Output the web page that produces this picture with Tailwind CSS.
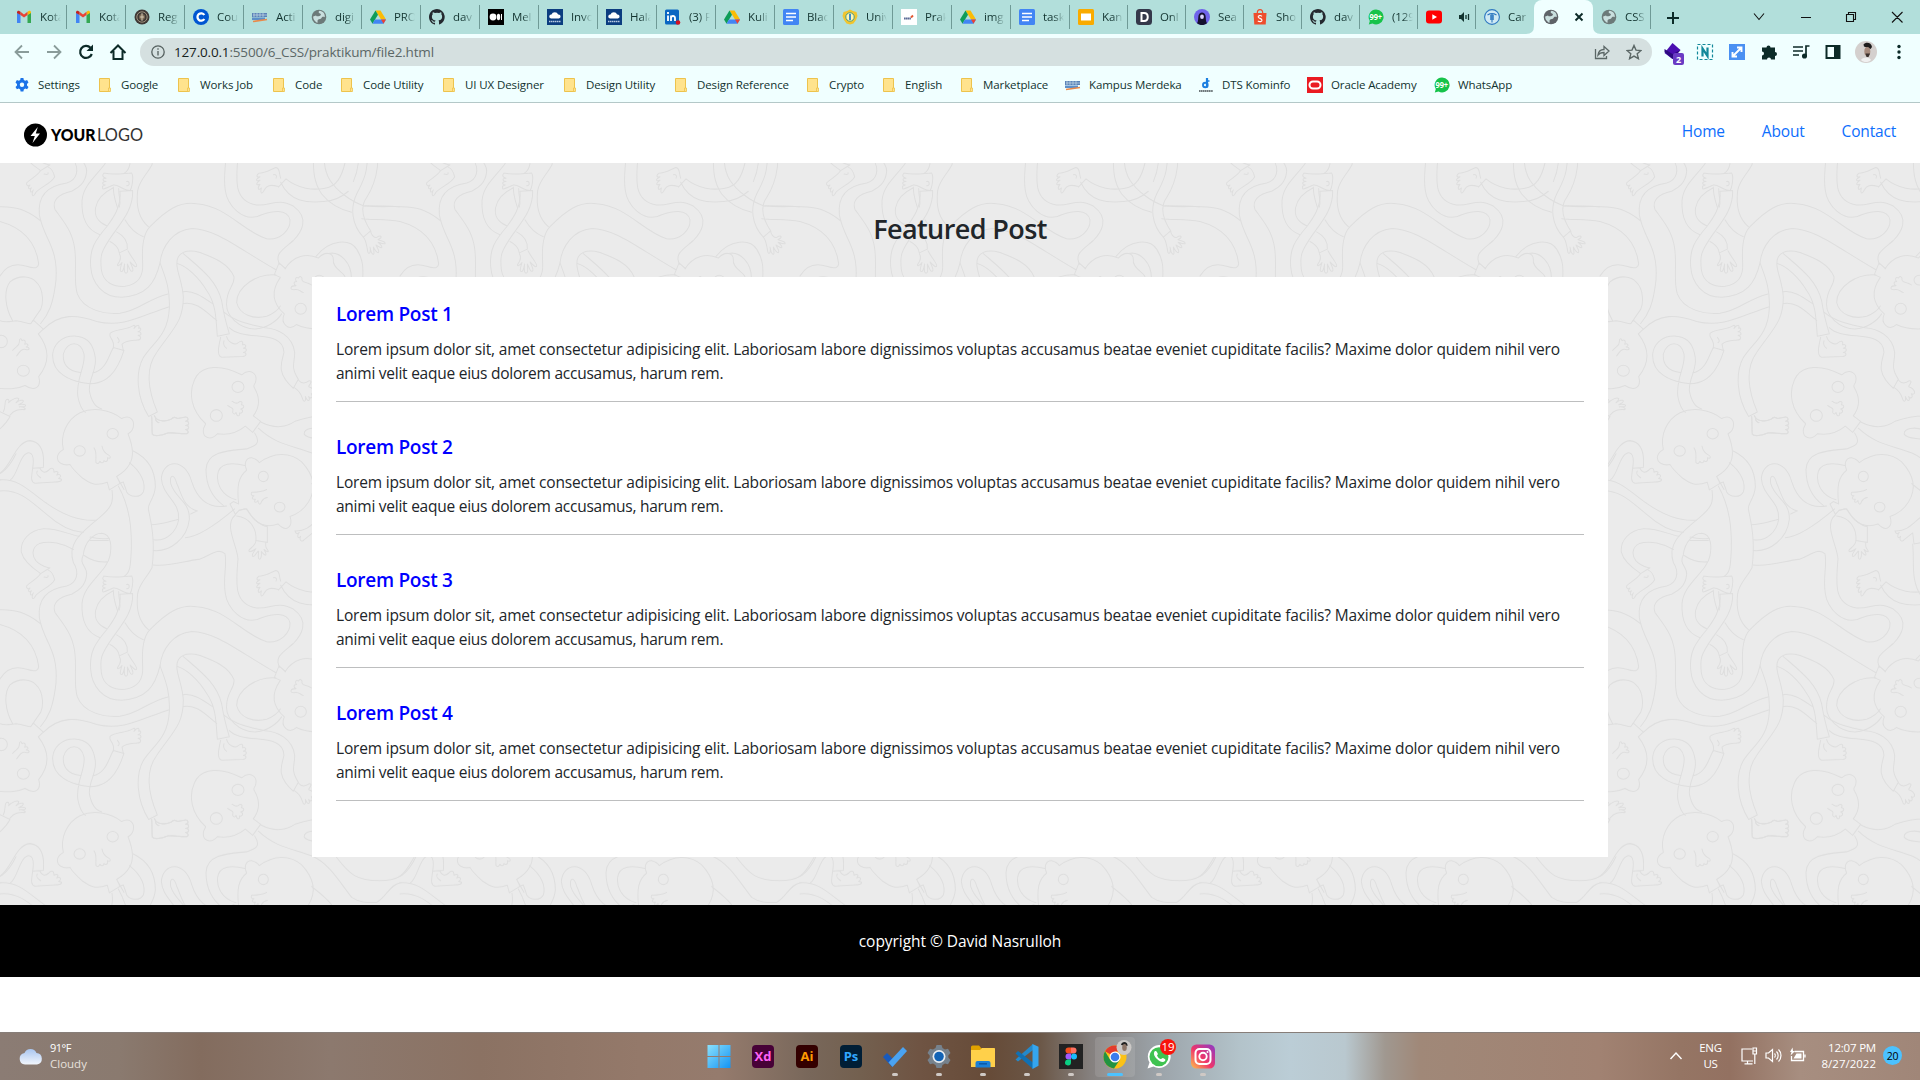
<!DOCTYPE html>
<html lang="en">
<head>
<meta charset="utf-8">
<title>Featured Post</title>
<script src="https://cdn.jsdelivr.net/npm/@tailwindcss/browser@4"></script>
</head>
<body class="flex h-[1080px] w-[1920px] flex-col overflow-hidden bg-white font-['Open_Sans',sans-serif] text-[#212529]">

<!-- icon library -->
<svg class="hidden">
  <symbol id="gmail" viewBox="0 0 16 16"><path d="M1 14V3.5L4.5 6v8z" fill="#4285f4"/><path d="M11.500 14V6L15 3.500V14z" fill="#34a853"/><path d="M11.500 6V2.800l1.200-.9C13.700 1.300 15 2 15 3.300V4z" fill="#fbbc04"/><path d="M4.500 6 8 8.600 11.500 6V2.800L8 5.400 4.500 2.800z" fill="#ea4335"/><path d="M1 4v-.7C1 2 2.300 1.300 3.300 1.900l1.200.9V6z" fill="#c5221f"/></symbol>
  <symbol id="seal" viewBox="0 0 16 16"><circle cx="8" cy="8" r="7.500" fill="#3e3835"/><circle cx="8" cy="8" r="5.200" fill="none" stroke="#b9a890" stroke-width=".8"/><circle cx="8" cy="8" r="3" fill="#7c6a55"/><path d="M8 4v8M6 8h4" stroke="#e5d9c4" stroke-width=".8"/></symbol>
  <symbol id="cour" viewBox="0 0 16 16"><circle cx="8" cy="8" r="8" fill="#0056d2"/><path d="M11.300 6A3.700 3.700 0 1 0 11.300 10" fill="none" stroke="#fff" stroke-width="2.300"/></symbol>
  <symbol id="kampus" viewBox="0 0 16 16"><path d="M0 4h15v4H0z" fill="#5a83b8"/><path d="M1 6h14M2 4v4M5 4v4M8 4v4M11 4v4" stroke="#d7e7ef" stroke-width=".6"/><path d="M0 8.500h13v2.500H0z" fill="#5c8fc9"/><path d="M1 12.500 15 10.500" stroke="#e98a4a" stroke-width="1.600"/></symbol>
  <symbol id="globe" viewBox="0 0 16 16"><circle cx="8" cy="8" r="7.300" fill="currentColor"/><path d="M8.500 1.800C7 3 7.500 4 9 4.500s1 2-.5 2.500-3 .5-3.500-.5L2.200 7.500C2 10 4 13 6.500 13.800c.5-1-.5-2 .5-3s3-.3 3.500-1.800 2-1.500 3.300-.8C14.200 5 12 2 8.500 1.800z" fill="#c9dfde"/></symbol>
  <symbol id="drive" viewBox="0 0 16 16"><path d="M5.500 1.500h5L16 10.500h-5z" fill="#fbbc04"/><path d="M5.500 1.500 8 5.700 2.500 14.800 0 10.500z" fill="#0f9d58"/><path d="M5 10.500h11l-2.500 4.300h-11z" fill="#4285f4"/><path d="m11 10.500 5 0-2.500 4.300z" fill="#ea4335"/></symbol>
  <symbol id="github" viewBox="0 0 16 16"><path fill="#24292f" d="M8 0C3.580 0 0 3.580 0 8c0 3.540 2.290 6.530 5.470 7.590.4.070.55-.17.55-.38v-1.490c-2.230.48-2.690-1.070-2.690-1.070-.36-.93-.89-1.170-.89-1.170-.73-.5.050-.49.050-.49.8.060 1.230.83 1.230.83.710 1.220 1.870.87 2.330.66.070-.51.280-.87.500-1.070-1.770-.2-3.640-.89-3.640-3.950 0-.87.310-1.590.82-2.150-.080-.2-.360-1.020.080-2.120 0 0 .67-.210 2.200.820a7.600 7.600 0 0 1 4 0c1.530-1.040 2.200-.820 2.200-.820.440 1.100.160 1.920.080 2.120.510.560.820 1.270.820 2.150 0 3.070-1.870 3.750-3.650 3.950.290.250.540.730.540 1.480v2.200c0 .210.150.460.550.380A8 8 0 0 0 8 0z"/></symbol>
  <symbol id="medium" viewBox="0 0 16 16"><path d="M0 0h16v16H0z"/><circle cx="5" cy="8" r="3.400" fill="#fff"/><ellipse cx="10.500" cy="8" rx="1.700" ry="3.200" fill="#fff"/><path d="M13.500 5v6" stroke="#fff"/></symbol>
  <symbol id="cloudhost" viewBox="0 0 16 16"><path d="M0 0h16v16H0z" fill="#0b3d80"/><path d="M4 9.500a2 2 0 0 1 .5-4 3.500 3.500 0 0 1 6.600 0 2 2 0 0 1 .9 4z" fill="#fff"/><path d="M2 12.500h12" stroke="#b9cbe3" stroke-width="1.500" stroke-dasharray="1.500 .5"/></symbol>
  <symbol id="linkedin" viewBox="0 0 16 16"><rect width="14" height="15" y=".5" rx="1.500" fill="#0a66c2"/><path d="M3 6.500V12M3 3v2M6 12V6.500M6 9c0-2.500 4-2.800 4 0v3" fill="none" stroke="#fff" stroke-width="1.800"/><circle cx="13" cy="13.500" r="2.300" fill="#d11124"/></symbol>
  <symbol id="docs" viewBox="0 0 16 16"><rect width="16" height="16" rx="1.500" fill="#4285f4"/><path d="M3 4.500h10M3 8h10M3 11.500h7" stroke="#fff" stroke-width="1.600"/></symbol>
  <symbol id="univ" viewBox="0 0 16 16"><path d="m8 .5 3 1.500 3.500 1L15.500 7 14 11l-2.500 3.500L8 15.500l-3.500-1L2 11 .5 7 1.500 3 5 2z" fill="#f0c52f"/><circle cx="8" cy="8" r="4.200" fill="#fff6b5" stroke="#4c9a80" stroke-width="1"/><path d="M7 5h2v6H7z" fill="#3e8ecb"/></symbol>
  <symbol id="prak" viewBox="0 0 16 16"><path d="M0 0h16v16H0z" fill="#fff"/><path d="M3 9.500h7" stroke="#5b6b96" stroke-width="2" stroke-dasharray="1.500 .3"/><path d="m10 8.500 2-2" stroke="#e4572e" stroke-width="1.800"/></symbol>
  <symbol id="slides" viewBox="0 0 16 16"><rect width="16" height="16" rx="1.500" fill="#f9ab00"/><path d="M3 4.500h10v7H3z" fill="#fff"/></symbol>
  <symbol id="dsq" viewBox="0 0 16 16"><rect width="16" height="16" rx="3.500" fill="#34384a"/><path d="M5.500 4v8H8c5 0 5-8 0-8z" fill="none" stroke="#fff" stroke-width="2"/></symbol>
  <symbol id="sea" viewBox="0 0 16 16"><circle cx="8" cy="8" r="8" fill="#6f63ea"/><path d="M3 14.200C4.500 12 4 9 4.500 6.500c1-4 6-4 7 0 .5 2.500 0 5.500 1.500 7.700-3 2.400-7 2.400-10 0z" fill="#15112e"/><ellipse cx="8" cy="7.800" rx="1.900" ry="2.300" fill="#d9d4ff"/></symbol>
  <symbol id="shopee" viewBox="0 0 16 16"><path d="M1.500 4h13l-.8 11.500H2.300z" fill="#ee4d2d"/><path d="M5.300 4c0-4.500 5.400-4.500 5.400 0" fill="none" stroke="#ee4d2d" stroke-width="1.200"/><path d="M10 7.300C8.500 6 6 6.500 6.200 8c.2 1.600 3.800 1.200 3.800 3.200 0 1.600-2.500 2-4.200.6" fill="none" stroke="#fff" stroke-width="1.100"/></symbol>
  <symbol id="wa99" viewBox="0 0 16 16"><path d="M8 .5A7.500 7.500 0 1 1 4.500 14.600L.8 15.500 1.800 12A7.500 7.500 0 0 1 8 .5z" fill="#16c34a"/><text x="7.800" y="11" font-size="8" font-weight="700" text-anchor="middle" fill="#fff" textLength="12.500" lengthAdjust="spacingAndGlyphs">99+</text></symbol>
  <symbol id="yt" viewBox="0 0 16 16"><rect y="1.500" width="16" height="13" rx="3" fill="#f00"/><path d="M6.300 5.300v5.400L11 8z" fill="#fff"/></symbol>
  <symbol id="canv" viewBox="0 0 16 16"><circle cx="8" cy="8" r="7.400" fill="#cfe9f3" stroke="#2e78c0" stroke-width="1.100"/><path d="M3.500 6C6 4.500 10 4.500 12.500 6M8 5v8.500M6.800 6v5M9.200 6v5" fill="none" stroke="#2e78c0" stroke-width="1.100"/></symbol>
  <symbol id="gear" viewBox="0 0 16 16"><path fill="#1a73e8" d="M6.600 1h2.800l.4 2 1.400.8 1.900-.7 1.400 2.400L13 6.900v1.700l1.500 1.300-1.400 2.400-1.900-.7-1.400.8-.4 2.100H6.600l-.4-2.100-1.400-.8-1.900.7-1.400-2.400L3 8.600V6.900L1.500 5.500l1.400-2.400 1.900.7L6.200 3z"/><circle cx="8" cy="7.700" r="2.200" fill="#f0ffff"/></symbol>
  <symbol id="folder" viewBox="0 0 16 16"><path d="M2.500 1.500h10v13h-10z" fill="#ffe38d" stroke="#edc34d"/><path d="M11.500 11h2v3.500h-2z" fill="#ffe38d" stroke="#edc34d" stroke-width=".8"/></symbol>
  <symbol id="dts" viewBox="0 0 16 16"><path d="M9 1v9.500" stroke="#1c7fe0" stroke-width="2.200"/><circle cx="7.300" cy="8" r="2.300" fill="none" stroke="#1c7fe0" stroke-width="1.900"/><path d="M9 4h2.500" stroke="#1c7fe0" stroke-width="1.500"/><path d="M1 14h14" stroke="#444c50" stroke-width="1.600" stroke-dasharray="1.500 .4"/></symbol>
  <symbol id="oracle" viewBox="0 0 16 16"><path d="M0 0h16v16H0z" fill="#ea1b22"/><rect x="2.500" y="4.500" width="11" height="7" rx="3.500" fill="none" stroke="#fff" stroke-width="2"/></symbol>
</svg>

<!-- tab strip -->
<div class="flex h-[34px] shrink-0 items-center bg-[#b2dfdb] text-[11.500px] tracking-[-0.100px] text-[#12332f]">
  <div id="tabs" class="flex h-full items-center"></div>
  <svg class="ml-[14px] mt-px size-4" viewBox="0 0 16 16"><path d="M8 2v12M2 8h12" stroke="#0c2b28" stroke-width="2"/></svg>
  <svg class="ml-auto mr-[4px] h-[30px] w-[160px] overflow-visible" viewBox="0 0 160 30" fill="none" stroke="#111" stroke-width="1.100"><path d="m-2 11.500 5 6 5-6"/><path d="M45 15.500h10M90.500 12.500h7v7h-7zM92.500 12.500v-2h7v7h-2M136 10l10.500 10.500M146.500 10 136 20.500"/></svg>
</div>

<!-- toolbar -->
<div class="flex h-[36px] shrink-0 items-center bg-[#f0ffff] pl-3 pr-[12px]">
  <div class="flex gap-3 text-[#0c2b28]">
    <svg class="size-5" viewBox="0 0 20 20" fill="none" stroke="#8a9c9a" stroke-width="1.800"><path d="M17 10H4M10 3.500 3.500 10l6.500 6.500"/></svg>
    <svg class="size-5" viewBox="0 0 20 20" fill="none" stroke="#8a9c9a" stroke-width="1.800"><path d="M3 10h13M10 3.500l6.500 6.500-6.500 6.500"/></svg>
    <svg class="size-5" viewBox="0 0 20 20"><path d="M15.800 12A6 6 0 1 1 14.500 5.800" fill="none" stroke="currentColor" stroke-width="2.200"/><path d="M17 2.500V9h-6.500z" fill="currentColor"/></svg>
    <svg class="size-5" viewBox="0 0 20 20"><path d="M5.500 9v8h9V9M2.500 11 10 3.500l7.500 7.500" fill="none" stroke="currentColor" stroke-width="2"/></svg>
  </div>
  <div class="ml-3 flex h-7 w-[1512px] items-center rounded-full bg-[#d5e0e0] pl-[11px] pr-[10px]">
    <svg class="size-[14px]" viewBox="0 0 14 14" fill="none" stroke="#55605f" stroke-width="1.300"><circle cx="7" cy="7" r="6.200"/><path d="M7 6v4.500M7 3.300v1.500"/></svg>
    <span class="ml-[9px] text-[13.500px] tracking-[-0.170px] text-[#5b6766]"><span class="text-[#152220]">127.0.0.1</span>:5500/6_CSS/praktikum/file2.html</span>
    <svg class="ml-auto size-4" viewBox="0 0 16 16" fill="none" stroke="#5b6766" stroke-width="1.300"><path d="M1.500 5v9.500h11V12M4 11c.5-4 3-5.500 6-5.500v-3L15 7l-5 4.500v-3c-3 0-4.500.5-6 2.500z"/></svg>
    <svg class="ml-4 size-4" viewBox="0 0 16 16" fill="none" stroke="#5b6766" stroke-width="1.400"><path d="m8 1.500 2 4.600 5 .4-3.800 3.300 1.200 4.900L8 12.100l-4.400 2.600 1.200-4.900L1 6.500l5-.4z"/></svg>
  </div>
  <div class="ml-auto -mr-px flex items-center gap-[12px]">
    <svg class="size-5 overflow-visible" viewBox="0 0 20 20"><path d="m9.500 1 8 7-8 9-8-6z" fill="#4a0fb0"/><path d="m1.500 7 8 5 8-4-8 9-8-7z" fill="#2c0a80"/><rect x="10" y="11" width="11" height="12" rx="2" fill="#6a3bc4"/><text x="15.500" y="20.500" font-size="9" font-weight="700" fill="#fff" text-anchor="middle">2</text></svg>
    <svg class="size-5" viewBox="0 0 20 20" fill="none" stroke="#12889a"><path d="M2.500 2.500h15v15h-15z" stroke-dasharray="3 2" stroke-width="1.200"/><path d="M7.500 14.500V6.500l5 7.500V5.500" stroke-width="2.200"/></svg>
    <svg class="size-5" viewBox="0 0 20 20"><path d="M2 2h16v16H2z" fill="#4a90f2"/><path d="m6.500 13.500 7-7M10 5.500h4.500V10M5.500 10v4.500H10" fill="none" stroke="#fff" stroke-width="1.900"/></svg>
    <svg class="size-5" viewBox="0 0 20 20" fill="#0c2b28"><path d="M3 5.500h4.500a2 2 0 1 1 4 0H16V10a2 2 0 1 1 0 4v3.500h-4a2 2 0 1 0-4 0H3V13.500a2 2 0 1 0 0-4z"/></svg>
    <svg class="size-5" viewBox="0 0 20 20" fill="none" stroke="#0c2b28" stroke-width="1.700"><path d="M2 5h10M2 9h10M2 13h6M15 14V4h3.500"/><circle cx="13.500" cy="14" r="1.700" fill="#0c2b28"/></svg>
    <svg class="size-5" viewBox="0 0 20 20"><path d="M2.500 3h15v14h-15z" fill="#0c2b28"/><path d="M4.500 5H11v10H4.500z" fill="#f0ffff"/></svg>
    <svg class="size-[22px]" viewBox="0 0 22 22"><circle cx="11" cy="11" r="11" fill="#d4d0ce"/><path d="M8.500 3.500c2-3 8-2.500 8.500 2.500l-1.500 2-6.500-2.500z" fill="#1d1c1c"/><ellipse cx="12.300" cy="10.500" rx="3" ry="4.500" fill="#a58a7c"/><path d="M10.500 12.500h4.500l-1.500 3.500h-2z" fill="#3a302c"/><path d="M6 19c1-3.500 9-3.500 10 0-3 2.800-7 2.800-10 0z" fill="#f0f0f0"/></svg>
    <svg class="size-5" viewBox="0 0 20 20" fill="#0c2b28"><circle cx="10" cy="4.500" r="1.700"/><circle cx="10" cy="10" r="1.700"/><circle cx="10" cy="15.500" r="1.700"/></svg>
  </div>
</div>

<!-- bookmarks bar -->
<div id="bookmarks" class="flex h-[33px] shrink-0 items-center border-b border-[#b4c8c8] bg-[#f0ffff] pb-[3px] pl-[14px] text-[11.500px] tracking-[-0.100px] text-[#12332f]"></div>

<!-- site header -->
<header class="flex h-[60px] shrink-0 items-center justify-between px-6">
  <svg class="mt-[3px] h-6 w-[120px]" viewBox="0 0 120 24"><circle cx="11.500" cy="12" r="11.500"/><path d="M13.800 4 6.500 13h4.300L8.500 20l7.500-9.500h-4.200z" fill="#fff"/><text x="27" y="17.700" font-family="Lato" font-weight="900" font-size="16.500" textLength="44.500" lengthAdjust="spacingAndGlyphs">YOUR</text><text x="73" y="17.700" font-family="Lato" font-weight="400" font-size="16.500" textLength="46" lengthAdjust="spacingAndGlyphs" fill="#333">LOGO</text></svg>
  <nav class="mb-0.5 flex gap-[37px] text-[15.500px] tracking-[-0.180px] text-[#0d6efd]"><a>Home</a><a>About</a><a>Contact</a></nav>
</header>

<main class="relative flex h-[742px] shrink-0 flex-col items-center bg-[#ebebeb]">
  <!-- doodle wallpaper, one repeating tile -->
  <svg class="absolute inset-0 h-full w-full" fill="none" stroke="#dedede" stroke-width="3" stroke-linejoin="round" stroke-linecap="round">
    <defs>
      <g id="foot"><path d="M0 0C4 8 12 14 22 14C32 16 40 14 50 10C58 2 62 4 70 8L90 4C104 2 104 14 94 16C106 16 106 27 94 28C106 28 106 39 94 40C104 42 104 52 94 52C70 52 60 48 40 50C20 58 0 60-6 54C-8 40-6 20-8 2M4 6C2 14 8 18 14 20"/></g>
      <g id="hand"><path d="M0 0C6 10 4 20-4 30C-10 38 0 38 8 26C2 44 0 54 8 52C12 50 14 40 16 30C14 46 14 58 22 56C28 54 24 40 24 30C30 42 34 56 40 50C44 46 36 34 32 24C42 34 50 42 52 36C54 28 36 12 26-8"/></g>
      <g id="tile">
        <!-- large head, left -->
        <path d="M190 202C180 160 200 115 240 95C280 78 330 85 365 112C390 100 404 116 400 136C398 146 392 152 384 156C400 195 402 225 388 245C380 260 370 268 350 280L372 318M350 280L360 300L328 319L322 297C285 310 270 300 245 283C225 265 215 255 210 245C190 250 172 240 172 224C174 210 184 206 190 202"/>
        <ellipse cx="338" cy="156" rx="17" ry="15"/><ellipse cx="239" cy="206" rx="17" ry="15"/>
        <path d="M282 197C292 210 286 225 288 240C294 246 298 240 300 236C304 244 312 240 312 234C318 240 326 234 322 226C332 230 334 222 326 218C314 212 308 204 306 192"/>
        <path d="M400 206C440 225 466 260 466 310C464 345 444 355 445 375C455 420 466 470 456 545C440 575 418 590 413 620C408 660 415 700 445 725"/>
        <path d="M388 240C425 268 438 300 430 325C420 344 390 340 380 325C376 310 372 304 370 296L360 300"/>
        <path d="M336 320C341 355 335 370 300 398C250 440 200 470 220 530C240 560 230 590 200 598C150 605 112 630 118 690C130 760 175 780 168 880C160 950 145 980 122 1006"/>
        <path d="M355 308C390 370 395 430 394 490C392 540 390 560 374 569"/>
        <path d="M0 290C60 285 95 330 140 358C190 392 240 410 288 407M0 322C60 315 100 360 140 390C180 425 215 440 250 443M237 454C200 446 170 430 130 432C90 436 60 465 64 500C70 525 95 545 122 562M220 492C190 475 150 465 118 475C95 485 95 510 108 525C120 538 135 542 148 546"/>
        <path d="M250 506C255 470 280 445 305 445C335 448 335 485 330 510C320 560 250 590 246 650C244 700 262 735 300 748M250 508C235 535 262 540 260 565C256 600 235 612 215 622C175 630 155 650 165 675C195 715 224 745 226 810C228 860 222 890 232 920C250 965 310 980 360 976C420 968 440 935 504 920"/>
        <path d="M270 456C285 460 310 462 327 460M270 466H325M250 508C275 525 300 530 322 528"/>
        <path d="M122 562L150 545M122 562C110 580 85 590 80 598C78 606 84 608 90 604C80 614 90 618 94 612C86 626 96 628 100 618C92 636 100 640 106 628C115 612 155 600 164 580C160 562 154 556 145 552M132 572C140 574 146 574 144 568"/>
        <!-- twisted arm and foot -->
        <path d="M312 569C340 576 370 570 395 569C402 580 396 612 390 620C370 620 352 600 340 604C320 612 306 620 308 612C304 604 316 606 316 604C304 602 306 594 318 594C306 592 306 584 318 584C304 580 308 574 312 569M380 594C390 590 390 608 380 606M360 622L398 620C400 670 370 705 340 745C300 800 300 810 304 850C310 890 345 900 375 898C420 892 430 860 428 830C424 770 435 740 450 725C500 675 540 650 590 658C680 665 730 740 800 760C840 765 872 735 870 705C862 670 815 680 785 690C730 718 680 660 676 620C668 570 682 540 675 505C655 485 630 510 600 520C550 525 520 542 460 537"/>
        <path d="M360 622C365 665 340 700 320 725C285 765 268 790 272 840C275 890 310 930 365 930C440 925 465 890 480 830C486 780 520 735 575 730C650 732 710 785 828 850"/>
        <path d="M340 610C340 640 350 660 353 672M356 614C356 640 364 650 358 668M340 612C280 640 265 700 320 722M375 705C390 730 405 745 430 754M350 740C370 750 384 765 382 790L358 801C355 785 345 775 330 768"/>
        <use href="#hand" x="358" y="803"/>
        <!-- legs, centre -->
        <path d="M480 830C500 880 510 910 508 960C505 1040 460 1060 430 1105C405 1150 410 1220 446 1276L472 1263C440 1190 440 1130 470 1090C520 1020 550 1000 550 930C548 880 520 840 535 812C548 794 570 792 600 800C640 815 685 830 702 870C705 895 680 905 680 945C676 985 720 1022 765 1022C800 1020 830 1000 845 978"/>
        <use href="#foot" x="463" y="104"/><use href="#foot" x="463" y="1274"/>
        <path d="M550 803C600 845 650 880 665 940C670 975 680 1010 688 1036L652 1043C648 1000 650 950 620 910C595 870 560 840 532 832M548 914C580 908 610 930 640 950M550 948C590 940 620 975 650 997M688 1018C730 1060 850 1020 852 1090C844 1120 828 1150 880 1194L895 1168C870 1130 885 1120 884 1090C878 1040 830 1020 795 1018C750 1010 705 1000 672 973"/>
        <path d="M662 1046C655 1075 650 1100 665 1104L728 1102C742 1100 740 1090 730 1090C742 1088 742 1078 730 1078C742 1074 738 1064 728 1068C730 1054 722 1056 714 1062C705 1070 685 1062 680 1044M672 1056C668 1068 674 1074 680 1078"/>
        <path d="M883 1192C905 1205 905 1220 910 1230C916 1236 918 1226 916 1218C924 1236 932 1230 926 1218C934 1226 940 1220 934 1210C944 1214 948 1206 938 1196C932 1190 926 1192 926 1188C934 1178 936 1172 928 1172C918 1180 904 1182 895 1170"/>
        <path d="M828 865C770 860 710 900 710 945C718 980 760 995 800 985C825 975 835 965 841 955"/>
        <!-- lower leg loop -->
        <path d="M130 1023C180 975 230 980 290 1000C370 1020 430 980 508 957M278 1150C320 1140 325 1100 340 1076L372 1084C350 1150 320 1180 270 1181C210 1175 155 1150 158 1095C165 1035 250 1025 275 1070C305 1130 265 1160 268 1200C275 1240 290 1250 305 1254M242 1148C200 1145 188 1120 190 1095C200 1055 245 1055 252 1095C258 1130 225 1170 234 1220C240 1250 248 1258 256 1264"/>
        <path d="M340 1076C345 1050 325 1050 330 1035C340 1022 380 1025 398 1013C404 1008 408 1012 402 1020C412 1008 420 1008 416 1020C426 1016 424 1028 414 1030C426 1030 426 1042 414 1040C426 1044 424 1054 412 1054C395 1056 380 1055 366 1066L370 1084M352 1046C358 1052 360 1058 354 1062"/>
        <!-- head at the tile seam, left -->
        <path d="M48 998C70 1000 80 1006 92 1007L100 996L130 1022L115 1036C150 1080 150 1120 116 1160C125 1190 105 1205 75 1186C50 1198 20 1196 -10 1194M0 998C16 1004 30 1000 48 998"/>
        <ellipse cx="70" cy="1143" rx="18" ry="16"/><ellipse cx="4" cy="1058" rx="18" ry="18"/>
        <path d="M38 1084C50 1070 60 1070 58 1058C58 1048 64 1048 66 1056C74 1050 78 1058 74 1066C84 1062 88 1072 78 1074C90 1074 90 1084 80 1082C66 1078 60 1086 50 1100M38 998C15 960 10 910 30 885C60 862 95 870 108 885C132 905 130 950 122 965C112 980 104 988 98 1000M0 868C20 835 50 830 80 840C105 848 115 845 116 832C108 775 75 730 0 710C-40 702-80 706-115 702M122 708C80 675 45 665 -5 667C-40 664-70 664-105 664"/>
        <!-- foot and hand, far left -->
        <path d="M0 92L30 106C20 125 10 135-10 150M10 92C20 75 10 58 22 56C30 56 26 66 26 66C32 58 52 48 56 54C58 60 48 64 48 66C58 58 70 56 70 62C70 68 56 70 56 72C68 68 80 72 76 76C70 80 60 76 58 78C70 76 80 84 74 86C60 86 45 84 30 102"/>
        <path d="M0 270C35 250 45 180 90 176C125 180 134 210 130 254L98 256C104 220 95 205 78 214C60 220 50 280 32 289M98 256C95 280 90 295 105 300L165 296C190 296 188 286 176 286C188 278 180 272 170 276C178 268 172 262 162 268C162 252 152 254 146 262C135 272 125 268 120 256M112 264C106 276 116 278 122 284"/>
        <!-- head, centre right -->
        <path d="M617 127C575 90 560 35 590-12C610-40 660-48 725-15C750-35 775-20 766 8C758 18 762 20 764 24C785 60 775 85 760 104L782 120L758 152L736 134C710 155 680 160 652 156C630 180 605 165 611 140z"/>
        <ellipse cx="714" cy="20" rx="18" ry="16"/><ellipse cx="649" cy="103" rx="18" ry="17"/>
        <path d="M683 74C700 85 700 80 698 94C702 102 706 98 708 94C712 110 722 104 718 96C728 98 732 88 722 84C734 82 734 72 724 72C730 62 722 60 714 66C708 70 702 64 696 62"/>
        <path d="M782 122C830 145 860 135 885 120C930 105 980 95 1030 115M775 140C830 190 880 190 936 212C990 235 1020 290 1055 332C1080 348 1100 347 1130 347C1160 330 1170 295 1200 290M764 154C785 185 765 192 740 200C690 205 620 205 618 260C618 320 650 350 670 364M735 248C700 240 665 240 655 265C645 300 665 335 708 348M970 145C945 135 910 140 913 158C925 175 960 165 990 180C1010 200 990 200 1008 214C1050 267 1070 284 1140 284C1200 284 1225 260 1248 214"/>
        <!-- rotated head, right -->
        <path d="M778 240C820 210 870 208 905 238C950 285 945 325 925 355C910 378 890 390 870 396C880 425 860 445 834 418C800 430 780 420 765 407C750 395 745 375 735 374L718 378L706 390L690 360L700 353L716 360C710 310 715 280 740 262C730 240 740 225 755 226C770 230 774 234 778 240M935 301C960 320 975 330 995 354"/>
        <ellipse cx="790" cy="280" rx="15" ry="15" transform="rotate(-25 790 280)"/><ellipse cx="839" cy="369" rx="16" ry="14"/>
        <path d="M800 318C785 326 770 326 755 326C750 334 758 336 762 336C752 342 758 348 766 346C760 356 768 358 774 350C774 362 782 364 784 354C788 348 790 342 802 341M718 378L740 374C760 410 790 425 802 425L802 472L768 466C770 430 750 400 710 395"/>
        <path d="M768 466C768 484 740 492 748 498C754 500 764 492 768 490C752 510 756 516 764 510C770 502 776 494 776 498C774 510 774 522 780 520C786 516 784 500 784 498C790 506 798 512 798 506C798 498 792 496 792 492C800 500 810 502 802 492C796 486 796 478 798 470"/>
        <!-- curled legs -->
        <path d="M680 366C620 375 590 340 575 295C555 225 490 230 484 285C488 340 540 350 536 405C530 440 500 470 460 464M592 380C550 370 545 330 530 300C522 270 508 275 512 300C525 345 570 350 568 405C562 460 510 500 460 495M592 380L572 389M454 420C480 420 510 410 536 404M556 458C600 455 660 410 704 374M706 392C670 420 712 480 714 520C708 590 700 650 770 662C815 665 830 640 880 665C930 700 905 740 880 765C850 790 820 805 840 835"/>
        <!-- feet, right -->
        <path d="M835 610L858 586C895 615 940 620 975 613C1010 608 1025 580 1035 540C1040 510 1030 480 1020 450M842 596C870 655 925 656 970 652C1010 650 1030 635 1045 622M1060 594C1075 560 1080 530 1070 480M842 584C836 565 840 556 828 553C810 560 795 570 776 570C766 578 772 582 780 580C766 588 766 594 780 590C766 600 768 606 780 602C770 614 776 622 784 612C780 628 786 632 792 620C800 604 810 602 835 608M820 574C828 572 832 578 828 584"/>
        <path d="M885 438C920 440 935 420 960 400M885 438C888 450 896 446 898 442C888 456 896 462 902 454C896 466 906 472 912 464L938 444L942 476L985 468M938 476C944 530 930 580 965 630C990 660 1020 675 1055 683M975 470C970 520 970 560 990 590C1010 620 1050 650 1090 664C1150 670 1180 664 1200 667M1100 460C1110 570 1090 590 1070 630C1050 670 1055 720 1090 755L1112 737C1080 690 1085 660 1100 640C1140 580 1135 520 1132 470"/>
        <path d="M1090 755C1100 765 1100 785 1104 800C1112 808 1112 790 1110 784C1114 806 1122 810 1122 800L1120 784C1128 800 1138 806 1136 794L1128 778C1140 786 1150 790 1144 780L1134 770C1148 774 1160 778 1154 770C1144 764 1138 766 1134 762C1150 756 1144 748 1130 756C1120 758 1112 745 1112 737"/>
        <!-- seam head, right -->
        <path d="M855 847C880 810 920 800 955 816C975 795 1000 800 1000 820C995 845 1035 860 1035 871M841 872L823 864L837 830L857 847M841 872C810 915 820 950 853 978C840 1005 865 1030 889 1009C930 1028 980 1024 1020 1010C1060 990 1080 940 1070 890M948 811C990 760 1050 760 1070 790C1090 820 1090 845 1088 880M985 803C1020 795 1055 830 1054 875"/>
        <ellipse cx="902" cy="963" rx="17" ry="16"/><ellipse cx="958" cy="880" rx="16" ry="14"/>
        <path d="M934 894C920 884 910 890 906 880C908 870 898 866 896 874C886 868 884 880 890 884C880 884 880 894 888 896C870 896 868 908 882 908C898 904 900 914 910 916"/>
      </g>
      <pattern id="doodle" width="1200" height="1170" patternUnits="userSpaceOnUse" patternTransform="translate(0 217) scale(.33333 .34439)">
        <use href="#tile"/><use href="#tile" x="-1200"/><use href="#tile" y="-1170"/><use href="#tile" y="1170"/><use href="#tile" x="1200"/>
      </pattern>
    </defs>
    <rect width="1920" height="742" fill="url(#doodle)" stroke="none"/>
  </svg>
  <h1 class="relative mt-[49px] text-[27px] font-semibold leading-[34px] tracking-[-0.600px]">Featured Post</h1>
  <section id="posts" class="relative mt-[31px] flex h-[580px] w-[1296px] flex-col gap-8 bg-white p-6"></section>
</main>

<footer class="flex h-[72px] shrink-0 items-center justify-center bg-black pt-0.5 text-[15.500px] font-medium tracking-[-0.050px] text-white">copyright © David Nasrulloh</footer>

<!-- taskbar -->
<div class="mt-auto flex h-12 shrink-0 items-center justify-between border-t border-[#877e79] bg-[linear-gradient(90deg,#8b7c74_0px,#8a7a6f_120px,#836c5e_200px,#8c796e_330px,#8b7263_480px,#94796a_640px,#957b6d_720px,#78675a_810px,#73604f_860px,#6f5443_920px,#664b38_990px,#6b5747_1040px,#85807e_1090px,#9ca4aa_1160px,#b3c3ca_1240px,#bbcdd6_1290px,#b9c8cf_1345px,#a09890_1385px,#a08878_1420px,#a18272_1600px,#957564_1680px,#937161_1730px,#a78e80_1800px,#a08678_1920px)] text-[11.500px] leading-4 text-white">
  <div class="flex w-[680px] items-center pb-[2px] pl-[19px]">
    <svg class="h-[19px] w-6" viewBox="0 0 24 19"><defs><linearGradient id="cl" x2="0" y2="1"><stop stop-color="#a9c6f0"/><stop offset="1" stop-color="#f2f6fc"/></linearGradient></defs><path d="M6 18.500A5.800 5.800 0 0 1 5.500 7 6.500 6.500 0 0 1 17.500 7 5.800 5.800 0 0 1 18 18.500z" fill="url(#cl)"/></svg>
    <div class="ml-[7px]"><p class="text-[11px] font-medium tracking-[-0.500px]">91°F</p><p class="text-[#e7e0dc]">Cloudy</p></div>
  </div>
  <div id="apps" class="flex h-full items-center pl-[2px]"></div>
  <div class="flex w-[680px] items-center justify-end pb-[2px] pr-[18px]">
    <svg class="mr-[15px] size-4" viewBox="0 0 16 16" fill="none" stroke="#fff" stroke-width="1.400"><path d="m2.500 11 5.500-6 5.500 6"/></svg>
    <div class="mr-[17px] w-[24px] text-center tracking-[-0.200px]"><p>ENG</p><p>US</p></div>
    <svg class="mr-[7px] size-[18px]" viewBox="0 0 18 18" fill="none" stroke="#fff" stroke-width="1.200"><path d="M12 2H2v12h11M7.500 14v2.500M4.500 16.800h8M13 1h3.500v6H13zM14.800 7v10M13.500 4h3"/></svg>
    <svg class="mr-[7px] size-[17px]" viewBox="0 0 17 17" fill="none" stroke="#fff" stroke-width="1.200"><path d="M1 6v5h2.500L7.500 14.500v-12L3.500 6zM9.500 6.500c1 1 1 3 0 4M11.500 4.500c2.200 2.200 2.200 5.800 0 8M13.500 2.500c3.300 3.300 3.300 8.700 0 12"/></svg>
    <svg class="mr-[16px] size-[17px]" viewBox="0 0 17 17" fill="none" stroke="#fff" stroke-width="1.300"><path d="M5.500 4.500h9v9h-12V9M16 7.500v3"/><path d="M7.500 6.500h5v5h-8z" fill="#fff" stroke="none"/><path d="M3.500.5 1 5h1.500L1.500 8.500 6 4H4z" fill="#fff" stroke="none"/></svg>
    <div class="mr-[7px] text-right tracking-[0px]"><p class="tracking-[-0.200px]">12:07 PM</p><p>8/27/2022</p></div>
    <div class="flex size-[19px] items-center justify-center rounded-full bg-[#4cc2ff] text-[10.500px] tracking-[-0.300px] text-black">20</div>
  </div>
</div>

<script>
const icon = (id, cls) => `<svg class="${cls}"><use href="#${id}"/></svg>`;

const tabs = [['gmail','Kota'],['gmail','Kota'],['seal','Reg'],['cour','Cou'],['kampus','Acti'],['globe','digi'],['drive','PRO'],['github','dav'],['medium','Mel'],['cloudhost','Invo'],['cloudhost','Hala'],['linkedin','(3) F'],['drive','Kuli'],['docs','Blac'],['univ','Univ'],['prak','Prak'],['drive','img'],['docs','task'],['slides','Kan'],['dsq','Onl'],['sea','Sea'],['shopee','Sho'],['github','dav'],['wa99','(129'],['yt',''],['canv','Car'],['globe',null],['globe','CSS']];
document.getElementById('tabs').innerHTML = tabs.map(([i, t], n) => {
  if (t === null) return `<div class="relative flex h-full w-[59px] items-center rounded-t-lg bg-[#f0ffff] pl-[9px] text-[#5f6368]">
      <svg class="absolute bottom-0 -left-2 h-2 w-[75px] text-[#f0ffff]" viewBox="0 0 75 8"><path d="M0 8Q8 8 8 0V8zM75 8Q67 8 67 0V8z" fill="currentColor"/></svg>
      ${icon(i, 'size-4')}<svg class="ml-[14px] size-3" viewBox="0 0 12 12"><path d="m2.500 2.500 7 7M9.500 2.500l-7 7" stroke="#0c2b28" stroke-width="1.900"/></svg></div>`;
  const line = n === 25 ? '' : 'border-r border-[#6f9a96]';
  const width = n === 0 ? 'w-[67px] pl-4' : n < 18 ? 'w-[59px] pl-2' : 'w-[58px] pl-2';
  const text = i === 'yt'
    ? `<svg class="ml-4 size-3" viewBox="0 0 12 12"><path d="M1 4v4h2l3 3V1L3 4z" fill="#12332f"/><path d="M8 4v4M10.500 3v6" stroke="#12332f" stroke-width="1.300"/></svg>`
    : `<span class="ml-2 w-[21px] overflow-hidden whitespace-nowrap [mask-image:linear-gradient(90deg,#000_50%,transparent)]">${t}</span>`;
  return `<div class="flex h-6 items-center ${width} ${line}">${icon(i, i === 'globe' ? 'size-4 text-[#6c7a79]' : 'size-4')}${text}</div>`;
}).join('');

const marks = [['gear','Settings',83],['folder','Google',79],['folder','Works Job',95],['folder','Code',68],['folder','Code Utility',102],['folder','UI UX Designer',121],['folder','Design Utility',111],['folder','Design Reference',132],['folder','Crypto',76],['folder','English',78],['folder','Marketplace',106],['kampus','Kampus Merdeka',133],['dts','DTS Kominfo',109],['oracle','Oracle Academy',127],['wa99','WhatsApp',90]];
document.getElementById('bookmarks').innerHTML = marks.map(([i, t, w]) =>
  `<div class="flex shrink-0 items-center gap-2 whitespace-nowrap" style="width:${w}px">${icon(i, 'size-4 shrink-0')}<span>${t}</span></div>`).join('');

const lorem = 'Lorem ipsum dolor sit, amet consectetur adipisicing elit. Laboriosam labore dignissimos voluptas accusamus beatae eveniet cupiditate facilis? Maxime dolor quidem nihil vero<br><span class="tracking-[-0.250px]">animi velit eaque eius dolorem accusamus, harum rem.</span>';
document.getElementById('posts').innerHTML = [1, 2, 3, 4].map(n =>
  `<article class="border-b border-[#bdbebf] pb-4"><h2 class="mb-[11px] pt-px text-[19px] font-semibold leading-6 tracking-[-0.280px] text-[#0000ff]">Lorem Post ${n}</h2><p class="whitespace-nowrap text-[15.500px] leading-6 tracking-[-0.177px]">${lorem}</p></article>`).join('');

const adobe = (bg, fg, t) => `<rect x="1" y="1" width="22" height="23" rx="4" fill="${bg}"/><text x="12" y="17.300" font-size="13" font-weight="700" text-anchor="middle" fill="${fg}">${t}</text>`;
const apps = [
  ['<path d="M.5 1h11v11H.5zM12.500 1h11v11h-11zM.5 13h11v11H.5zM12.500 13h11v11h-11z" fill="url(#win)"/><defs><linearGradient id="win" x2="1" y2="1"><stop stop-color="#8be0fb"/><stop offset="1" stop-color="#1394f5"/></linearGradient></defs>', 0],
  [adobe('#470137', '#ff61f6', 'Xd'), 0],
  [adobe('#330000', '#ff9a00', 'Ai'), 0],
  [adobe('#001e36', '#31a8ff', 'Ps'), 0],
  ['<path d="m0 13 4-4 6 6-1 8z" fill="#185abd"/><path d="M5.500 18.500 20 3l4 4L9.500 23z" fill="#4aa3f2"/>', 1],
  ['<path d="M9.500 1h5l1 3 2.500 1.500 3-.7 2.500 4.200-2.200 2.500v2l2.200 2.500-2.500 4.200-3-.7-2.500 1.500-1 3h-5l-1-3L6 19.500l-3 .7L.5 16l2.200-2.500v-2L.5 9 3 4.800l3 .7L8.500 4z" fill="#76828d"/><circle cx="12" cy="12.500" r="6.500" fill="#e9edf1"/><circle cx="12" cy="12.500" r="4.800" fill="#1263b5"/>', 1],
  ['<path d="M0 3q0-1.500 1.500-1.500H8l2.500 3H24V10H0z" fill="#e0a200"/><path d="M0 6h9l2-2h12q1 0 1 1v18H0z" fill="#ffd04a"/><path d="M4.500 23.500V19q0-2 2-2h11q2 0 2 2v4.500z" fill="#1b7fd6"/><path d="M8 19.800h8" stroke="#0b58a6" stroke-width="1.500"/>', 1],
  ['<path d="M18 0v6L3 17.500l-2.500-2z" fill="#2489ca"/><path d="M18 25v-6.500L3 7 .5 9.500z" fill="#1070b3"/><path d="m17.500 0 6 2.800v19L17.500 25z" fill="#35a5ee"/>', 1],
  ['<path d="M0 0h24v25H0z" fill="#222"/><path d="M12 3.500H9.500a3 3 0 0 0 0 6H12z" fill="#f24e1e"/><path d="M12 3.500h2.500a3 3 0 0 1 0 6H12z" fill="#ff7262"/><path d="M12 9.500H9.500a3 3 0 0 0 0 6H12z" fill="#a259ff"/><circle cx="15" cy="12.500" r="3" fill="#1abcfe"/><path d="M9.500 15.500H12v3a3 3 0 1 1-2.500-3z" fill="#0acf83"/>', 1],
  ['<circle cx="12" cy="13" r="11.500" fill="#fbc116"/><path d="M12 13 2 7.300A11.500 11.500 0 0 1 22 7.300L12 7.500z" fill="#e33b2e"/><path d="M2 7.300A11.500 11.500 0 0 0 11 24.500L17 15.500 7 15.500z" fill="#229342"/><circle cx="12" cy="13" r="5.500" fill="#fff"/><circle cx="12" cy="13" r="4.300" fill="#3a7cec"/><circle cx="21" cy="3.500" r="7.500" fill="#cbc8c6"/><path d="M18 1c1-4.500 7-3.500 6.500 1z" fill="#222"/><ellipse cx="21.500" cy="3.500" rx="2.300" ry="3.500" fill="#8d7466"/>', 2],
  ['<path d="M12 1a11.500 11.500 0 1 1-5.500 21.500L.5 24.500l2-6A11.500 11.500 0 0 1 12 1z" fill="#fff"/><circle cx="12" cy="12.700" r="9.500" fill="#3fc351"/><path d="M8 7c-2 2-1 5 2 8s6 4 8 2c1-1.500 0-2-2-3-1.500 0-1.500 1.500-2.500 1C12 14.500 10.500 13 10 11.500c1-1 1-1.500.5-2.500S9.500 6.500 8 7z" fill="#fff"/><circle cx="21" cy="3" r="8" fill="#f8140c"/><text x="21" y="7" font-size="11.500" fill="#fff" text-anchor="middle">19</text>', 1],
  ['<defs><linearGradient id="ig" x1="0" y1="1" x2="1" y2="0"><stop stop-color="#fdc04b"/><stop offset=".45" stop-color="#f0366a"/><stop offset="1" stop-color="#8a3ac8"/></linearGradient></defs><rect y=".5" width="24" height="24" rx="5.500" fill="url(#ig)"/><rect x="4.500" y="5" width="15" height="15" rx="4" fill="none" stroke="#fff" stroke-width="2"/><circle cx="12" cy="12.500" r="3.700" fill="none" stroke="#fff" stroke-width="1.900"/><circle cx="16.500" cy="8" r="1" fill="#fff"/>', 1]
];
const dots = ['h-[3px] w-[6px]', 'h-[3px] w-[6px] bg-[#cfc9c5]', 'h-[3px] w-4 bg-[#4cc2ff]'];
document.getElementById('apps').innerHTML = apps.map(([svg, d]) =>
  `<div class="flex h-full w-[44px] items-center justify-center"><div class="flex h-10 w-10 flex-col items-center justify-end gap-[4px] rounded pb-[1px] ${d === 2 ? 'bg-white/10' : ''}"><svg class="h-[25px] w-6 overflow-visible" viewBox="0 0 24 25">${svg}</svg><i class="rounded-full ${dots[d]}"></i></div></div>`).join('');
</script>
</body>
</html>
